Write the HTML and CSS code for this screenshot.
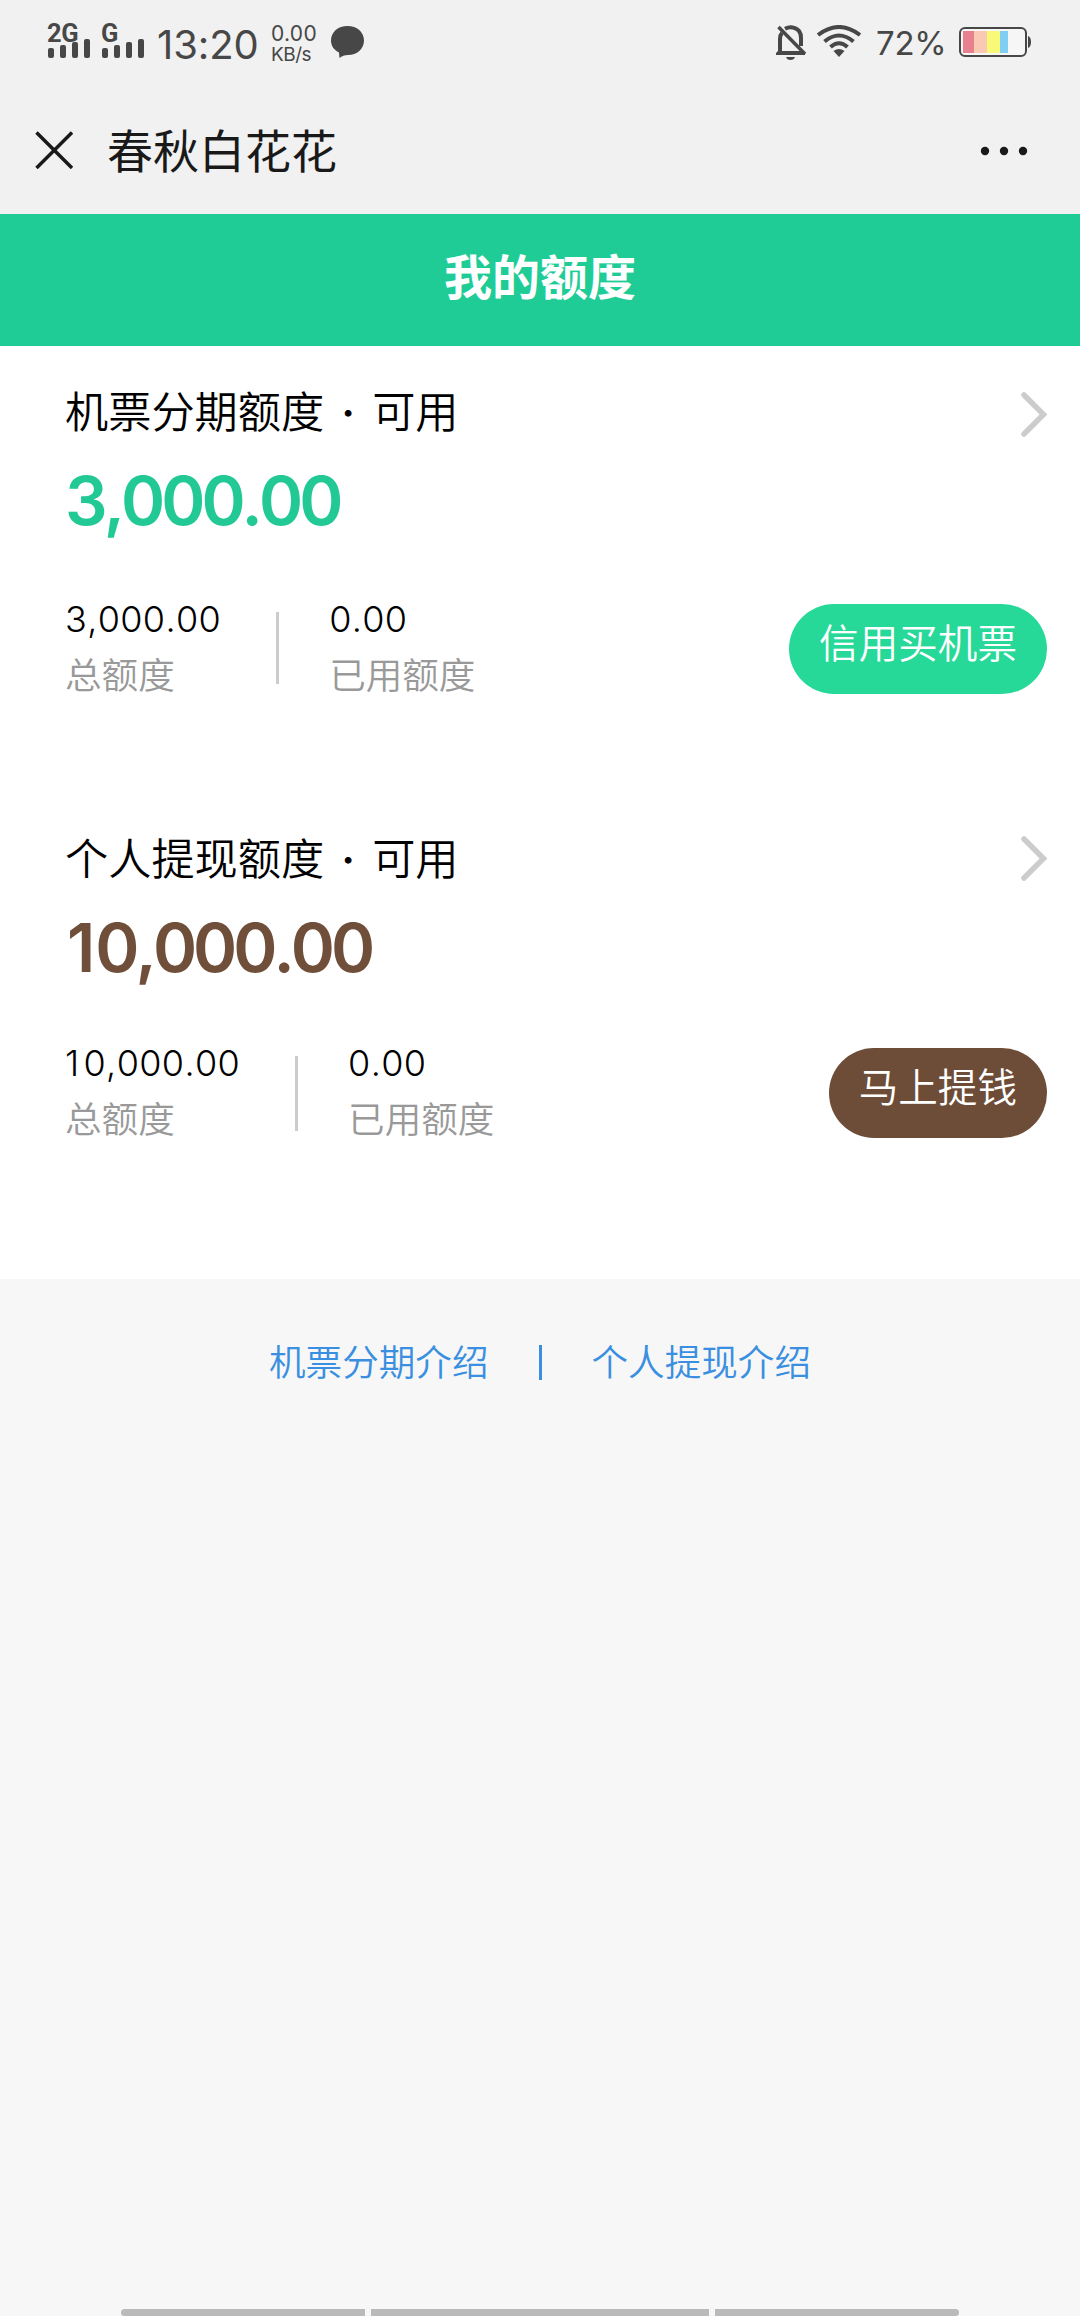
FILE: index.html
```html
<!DOCTYPE html>
<html lang="zh-CN">
<head>
<meta charset="utf-8">
<title>春秋白花花</title>
<link rel="stylesheet" href="styles.css">
</head>
<body>
<div class="status">
  <div class="signal"><span class="net">2G</span>
    <svg width="42" height="19" viewBox="0 0 42 19"><rect y="9" width="6" height="10" rx="2"/><rect x="12" y="6" width="6" height="13" rx="2"/><rect x="24" y="3" width="6" height="16" rx="2"/><rect x="36" width="6" height="19" rx="2"/></svg></div>
  <div class="signal"><span class="net">G</span>
    <svg width="42" height="19" viewBox="0 0 42 19"><rect y="9" width="6" height="10" rx="2"/><rect x="12" y="6" width="6" height="13" rx="2"/><rect x="24" y="3" width="6" height="16" rx="2"/><rect x="36" width="6" height="19" rx="2"/></svg></div>
  <span class="clock">13:20</span>
  <div class="speed"><span class="rate">0.00</span><span class="unit">KB/s</span></div>
  <svg class="bubble" width="34" height="33" viewBox="0 0 34 33"><path d="M16.500 0C26 0 33 6 33 14.500S26 29 17 29Q12 29 8.500 32L8 26.500C3 24 0 20 0 14.500C0 6 7 0 16.500 0Z"/></svg>
  <div class="right">
    <svg width="31" height="36" viewBox="0 0 31 36"><path d="M4 28V14Q4 10 6 8M9 3.800Q14 1 18.500 3Q25 5 25 13V21" fill="none" stroke="#474747" stroke-width="4"/><path d="M2.500 2L29 29" fill="none" stroke="#474747" stroke-width="3.500"/><path d="M2 26H26L29 29V30H0V28ZM10 32H19Q18 35 14.500 35T10 32Z"/></svg>
    <svg class="wifi" width="46" height="33" viewBox="0 0 46 33"><path d="M2 10Q23 -6 44 10M8.500 16.500Q23 4.500 37.500 16.500M14.500 22Q23 14.500 31.500 22" fill="none" stroke="#474747" stroke-width="4"/><path d="M17.500 26Q23 22 28.500 26L23 32Z"/></svg>
    <span class="percent">72%</span>
    <svg class="battery" width="73" height="30" viewBox="0 0 73 30"><rect x="1" y="1" width="66" height="28" rx="5" fill="#fff" fill-opacity=".35" stroke="#474747" stroke-width="2"/><path d="M69 9Q72 10 72 15T69 21Z"/><path fill="#e8808f" d="M4 4h11v22H4z"/><path fill="#f9c9b4" d="M15 4h13v22H15z"/><path fill="#f9f977" d="M28 4h13v22H28z"/><path fill="#7fcff3" d="M41 4h8v22h-8z"/></svg>
  </div>
</div>
<nav class="nav">
  <svg class="close" width="38" height="38" viewBox="0 0 38 38"><path d="M1.500 1.500L37 37M37 1.500L1.500 37" stroke="#191919" stroke-width="3.500"/></svg>
  <h1>春秋白花花</h1>
  <svg class="more" width="48" height="10" viewBox="0 0 48 10"><circle cx="5" cy="5" r="4.200"/><circle cx="24" cy="5" r="4.200"/><circle cx="43" cy="5" r="4.200"/></svg>
</nav>
<header class="banner">我的额度</header>
<main>
  <section class="quota">
    <div class="head"><h2>机票分期额度<i>·</i>可用</h2>
      <svg width="28" height="47" viewBox="0 0 28 47"><path d="M4 4L23.500 23.500L4 43" fill="none" stroke="#ccc" stroke-width="5.500" stroke-linecap="round"/></svg></div>
    <p class="amount">3,000.00</p>
    <div class="detail">
      <div class="stat"><b>3,000.00</b><span>总额度</span></div>
      <div class="stat used"><b>0.00</b><span>已用额度</span></div>
      <button>信用买机票</button>
    </div>
  </section>
  <section class="quota cash">
    <div class="head"><h2>个人提现额度<i>·</i>可用</h2>
      <svg width="28" height="47" viewBox="0 0 28 47"><path d="M4 4L23.500 23.500L4 43" fill="none" stroke="#ccc" stroke-width="5.500" stroke-linecap="round"/></svg></div>
    <p class="amount"><span class="one">1</span>0,000.00</p>
    <div class="detail">
      <div class="stat"><b><span class="one">1</span>0,000.00</b><span>总额度</span></div>
      <div class="stat used"><b>0.00</b><span>已用额度</span></div>
      <button>马上提钱</button>
    </div>
  </section>
</main>
<footer class="links"><a>机票分期介绍</a><span class="bar"></span><a>个人提现介绍</a></footer>
<div class="gesture"><span></span><span></span><span></span></div>
</body>
</html>
```
FILE: styles.css
```css
* { box-sizing: border-box; }
body { margin: 0; width: 1080px; height: 2316px; display: flex; flex-direction: column; overflow: hidden; background: #f7f7f7; color: #000; font-family: Inter, "Noto Sans CJK SC", sans-serif; font-weight: 350; }
h1, h2, p { margin: 0; font-weight: inherit; }
svg { display: block; flex: none; }
.status { height: 90px; flex: none; display: flex; align-items: flex-start; padding: 0 48px; background: #f1f1f1; color: #474747; fill: #474747; white-space: nowrap; }
.signal { width: 42px; height: 58px; margin-right: 12px; padding-top: 21px; display: flex; flex-direction: column; justify-content: space-between; }
.net { height: 18px; margin-left: -1px; font: 700 25.500px/24px Roboto, sans-serif; letter-spacing: -.5px; }
.clock { width: 115px; margin-top: 20px; padding-left: 1px; font-size: 40px; line-height: 49px; font-weight: 400; letter-spacing: -.1px; }
.speed { width: 60px; margin-top: 22px; display: flex; flex-direction: column; font-weight: 400; }
.rate { font-size: 21px; line-height: 23px; letter-spacing: .3px; }
.unit { font-size: 19px; line-height: 19px; letter-spacing: -.5px; }
.bubble { margin-top: 26px; }
.right { margin-left: auto; display: flex; }
.right svg { margin-top: 25px; }
.right .wifi { margin-left: 9px; }
.percent { width: 97px; margin-top: 18px; padding-left: 14px; font-size: 33px; line-height: 51px; font-weight: 400; letter-spacing: -.3px; }
.right .battery { margin-top: 27px; }
.nav { height: 124px; flex: none; display: flex; align-items: center; padding: 0 52px 3px 35px; background: #f1f1f1; color: #191919; fill: #191919; }
.close { margin-bottom: 2px; }
.nav h1 { margin-left: 34px; font-size: 46px; line-height: 60px; font-weight: 400; }
.more { margin-left: auto; }
.banner { height: 132px; flex: none; background: #20cc96; color: #fff; font-size: 48px; line-height: 128px; font-weight: 700; text-align: center; }
main { height: 933px; flex: none; background: #fff; }
.quota { height: 444px; padding: 36px 33px 0 65px; }
.head { height: 60px; display: flex; justify-content: space-between; }
.head svg { margin: 9px -1px 0 0; }
h2 { display: flex; font-size: 43.200px; line-height: 61px; }
h2 i { width: 48px; text-align: center; font-style: normal; font-weight: 600; }
.amount { height: 80px; margin-top: 19px; font-size: 67px; line-height: 80px; font-weight: 600; font-kerning: none; letter-spacing: -4px; color: #22c995; }
.amount .one { margin: 0 4px 0 2px; }
.cash h2 { line-height: 67px; }
.cash .amount { line-height: 86px; color: #6f4f39; }
.detail { height: 100px; margin-top: 54px; display: flex; align-items: flex-start; }
.stat { display: flex; flex-direction: column; }
.stat b { height: 56px; font-size: 36px; line-height: 48px; font-weight: 300; font-kerning: none; letter-spacing: .350px; }
.stat > span { font-size: 36.600px; line-height: 50px; color: #999; }
.stat .one { margin-right: 4px; }
.used { position: relative; margin-left: 108px; }
.used::before { content: ""; position: absolute; left: -53px; top: 17px; width: 3px; height: 72px; background: #ccc; }
.cash .used::before { height: 75px; }
button { height: 90px; margin: 9px 0 0 auto; padding: 0 30px 10px; border: 0; border-radius: 45px; background: #26d998; color: #fff; font: inherit; font-size: 39.600px; line-height: 78px; }
.cash button { background: #6d4d38; }
.links { height: 140px; flex: none; display: flex; justify-content: center; align-items: center; padding: 27px 0 0; font-size: 36.600px; line-height: 50px; color: #3a8fe0; }
.bar { width: 3px; height: 35px; margin: 0 50px; background: currentColor; }
.gesture { margin-top: auto; height: 7px; display: grid; grid-template-columns: 244px 338px 244px; gap: 6px; justify-content: center; }
.gesture span { background: #bababa; }
.gesture span:first-child { border-radius: 4px 0 0 4px; }
.gesture span:last-child { border-radius: 0 4px 4px 0; }
```
